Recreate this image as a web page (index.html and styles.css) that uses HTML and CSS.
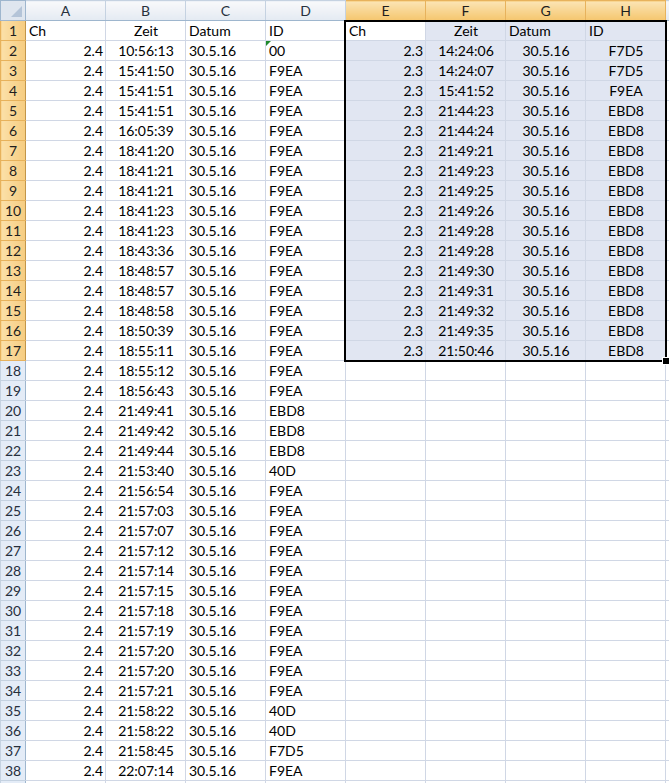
FILE: index.html
```html
<!DOCTYPE html>
<html>
<head>
<meta charset="utf-8">
<link rel="stylesheet" href="styles.css">
</head>
<body>
<div class="sheet">
<table class="grid">
<colgroup><col class="c-rh"><col class="c"><col class="c"><col class="c"><col class="c"><col class="c"><col class="c"><col class="c"><col class="c"><col class="c"></colgroup>
<thead>
<tr><th class="corner"><span class="tri"></span></th><th class="ch">A</th><th class="ch">B</th><th class="ch">C</th><th class="ch">D</th><th class="ch sel">E</th><th class="ch sel">F</th><th class="ch sel">G</th><th class="ch sel">H</th><th class="ch"></th></tr>
</thead>
<tbody>
<tr><th class="rh sel">1</th><td>Ch</td><td class="c">Zeit</td><td>Datum</td><td>ID</td><td class="act">Ch</td><td class="s c">Zeit</td><td class="s">Datum</td><td class="s">ID</td><td></td></tr>
<tr><th class="rh sel">2</th><td class="r">2.4</td><td class="c">10:56:13</td><td>30.5.16</td><td class="warn">00</td><td class="s r">2.3</td><td class="s c">14:24:06</td><td class="s c">30.5.16</td><td class="s c">F7D5</td><td></td></tr>
<tr><th class="rh sel">3</th><td class="r">2.4</td><td class="c">15:41:50</td><td>30.5.16</td><td>F9EA</td><td class="s r">2.3</td><td class="s c">14:24:07</td><td class="s c">30.5.16</td><td class="s c">F7D5</td><td></td></tr>
<tr><th class="rh sel">4</th><td class="r">2.4</td><td class="c">15:41:51</td><td>30.5.16</td><td>F9EA</td><td class="s r">2.3</td><td class="s c">15:41:52</td><td class="s c">30.5.16</td><td class="s c">F9EA</td><td></td></tr>
<tr><th class="rh sel">5</th><td class="r">2.4</td><td class="c">15:41:51</td><td>30.5.16</td><td>F9EA</td><td class="s r">2.3</td><td class="s c">21:44:23</td><td class="s c">30.5.16</td><td class="s c">EBD8</td><td></td></tr>
<tr><th class="rh sel">6</th><td class="r">2.4</td><td class="c">16:05:39</td><td>30.5.16</td><td>F9EA</td><td class="s r">2.3</td><td class="s c">21:44:24</td><td class="s c">30.5.16</td><td class="s c">EBD8</td><td></td></tr>
<tr><th class="rh sel">7</th><td class="r">2.4</td><td class="c">18:41:20</td><td>30.5.16</td><td>F9EA</td><td class="s r">2.3</td><td class="s c">21:49:21</td><td class="s c">30.5.16</td><td class="s c">EBD8</td><td></td></tr>
<tr><th class="rh sel">8</th><td class="r">2.4</td><td class="c">18:41:21</td><td>30.5.16</td><td>F9EA</td><td class="s r">2.3</td><td class="s c">21:49:23</td><td class="s c">30.5.16</td><td class="s c">EBD8</td><td></td></tr>
<tr><th class="rh sel">9</th><td class="r">2.4</td><td class="c">18:41:21</td><td>30.5.16</td><td>F9EA</td><td class="s r">2.3</td><td class="s c">21:49:25</td><td class="s c">30.5.16</td><td class="s c">EBD8</td><td></td></tr>
<tr><th class="rh sel">10</th><td class="r">2.4</td><td class="c">18:41:23</td><td>30.5.16</td><td>F9EA</td><td class="s r">2.3</td><td class="s c">21:49:26</td><td class="s c">30.5.16</td><td class="s c">EBD8</td><td></td></tr>
<tr><th class="rh sel">11</th><td class="r">2.4</td><td class="c">18:41:23</td><td>30.5.16</td><td>F9EA</td><td class="s r">2.3</td><td class="s c">21:49:28</td><td class="s c">30.5.16</td><td class="s c">EBD8</td><td></td></tr>
<tr><th class="rh sel">12</th><td class="r">2.4</td><td class="c">18:43:36</td><td>30.5.16</td><td>F9EA</td><td class="s r">2.3</td><td class="s c">21:49:28</td><td class="s c">30.5.16</td><td class="s c">EBD8</td><td></td></tr>
<tr><th class="rh sel">13</th><td class="r">2.4</td><td class="c">18:48:57</td><td>30.5.16</td><td>F9EA</td><td class="s r">2.3</td><td class="s c">21:49:30</td><td class="s c">30.5.16</td><td class="s c">EBD8</td><td></td></tr>
<tr><th class="rh sel">14</th><td class="r">2.4</td><td class="c">18:48:57</td><td>30.5.16</td><td>F9EA</td><td class="s r">2.3</td><td class="s c">21:49:31</td><td class="s c">30.5.16</td><td class="s c">EBD8</td><td></td></tr>
<tr><th class="rh sel">15</th><td class="r">2.4</td><td class="c">18:48:58</td><td>30.5.16</td><td>F9EA</td><td class="s r">2.3</td><td class="s c">21:49:32</td><td class="s c">30.5.16</td><td class="s c">EBD8</td><td></td></tr>
<tr><th class="rh sel">16</th><td class="r">2.4</td><td class="c">18:50:39</td><td>30.5.16</td><td>F9EA</td><td class="s r">2.3</td><td class="s c">21:49:35</td><td class="s c">30.5.16</td><td class="s c">EBD8</td><td></td></tr>
<tr><th class="rh sel">17</th><td class="r">2.4</td><td class="c">18:55:11</td><td>30.5.16</td><td>F9EA</td><td class="s r">2.3</td><td class="s c">21:50:46</td><td class="s c">30.5.16</td><td class="s c">EBD8</td><td></td></tr>
<tr><th class="rh">18</th><td class="r">2.4</td><td class="c">18:55:12</td><td>30.5.16</td><td>F9EA</td><td></td><td></td><td></td><td></td><td></td></tr>
<tr><th class="rh">19</th><td class="r">2.4</td><td class="c">18:56:43</td><td>30.5.16</td><td>F9EA</td><td></td><td></td><td></td><td></td><td></td></tr>
<tr><th class="rh">20</th><td class="r">2.4</td><td class="c">21:49:41</td><td>30.5.16</td><td>EBD8</td><td></td><td></td><td></td><td></td><td></td></tr>
<tr><th class="rh">21</th><td class="r">2.4</td><td class="c">21:49:42</td><td>30.5.16</td><td>EBD8</td><td></td><td></td><td></td><td></td><td></td></tr>
<tr><th class="rh">22</th><td class="r">2.4</td><td class="c">21:49:44</td><td>30.5.16</td><td>EBD8</td><td></td><td></td><td></td><td></td><td></td></tr>
<tr><th class="rh">23</th><td class="r">2.4</td><td class="c">21:53:40</td><td>30.5.16</td><td>40D</td><td></td><td></td><td></td><td></td><td></td></tr>
<tr><th class="rh">24</th><td class="r">2.4</td><td class="c">21:56:54</td><td>30.5.16</td><td>F9EA</td><td></td><td></td><td></td><td></td><td></td></tr>
<tr><th class="rh">25</th><td class="r">2.4</td><td class="c">21:57:03</td><td>30.5.16</td><td>F9EA</td><td></td><td></td><td></td><td></td><td></td></tr>
<tr><th class="rh">26</th><td class="r">2.4</td><td class="c">21:57:07</td><td>30.5.16</td><td>F9EA</td><td></td><td></td><td></td><td></td><td></td></tr>
<tr><th class="rh">27</th><td class="r">2.4</td><td class="c">21:57:12</td><td>30.5.16</td><td>F9EA</td><td></td><td></td><td></td><td></td><td></td></tr>
<tr><th class="rh">28</th><td class="r">2.4</td><td class="c">21:57:14</td><td>30.5.16</td><td>F9EA</td><td></td><td></td><td></td><td></td><td></td></tr>
<tr><th class="rh">29</th><td class="r">2.4</td><td class="c">21:57:15</td><td>30.5.16</td><td>F9EA</td><td></td><td></td><td></td><td></td><td></td></tr>
<tr><th class="rh">30</th><td class="r">2.4</td><td class="c">21:57:18</td><td>30.5.16</td><td>F9EA</td><td></td><td></td><td></td><td></td><td></td></tr>
<tr><th class="rh">31</th><td class="r">2.4</td><td class="c">21:57:19</td><td>30.5.16</td><td>F9EA</td><td></td><td></td><td></td><td></td><td></td></tr>
<tr><th class="rh">32</th><td class="r">2.4</td><td class="c">21:57:20</td><td>30.5.16</td><td>F9EA</td><td></td><td></td><td></td><td></td><td></td></tr>
<tr><th class="rh">33</th><td class="r">2.4</td><td class="c">21:57:20</td><td>30.5.16</td><td>F9EA</td><td></td><td></td><td></td><td></td><td></td></tr>
<tr><th class="rh">34</th><td class="r">2.4</td><td class="c">21:57:21</td><td>30.5.16</td><td>F9EA</td><td></td><td></td><td></td><td></td><td></td></tr>
<tr><th class="rh">35</th><td class="r">2.4</td><td class="c">21:58:22</td><td>30.5.16</td><td>40D</td><td></td><td></td><td></td><td></td><td></td></tr>
<tr><th class="rh">36</th><td class="r">2.4</td><td class="c">21:58:22</td><td>30.5.16</td><td>40D</td><td></td><td></td><td></td><td></td><td></td></tr>
<tr><th class="rh">37</th><td class="r">2.4</td><td class="c">21:58:45</td><td>30.5.16</td><td>F7D5</td><td></td><td></td><td></td><td></td><td></td></tr>
<tr><th class="rh">38</th><td class="r">2.4</td><td class="c">22:07:14</td><td>30.5.16</td><td>F9EA</td><td></td><td></td><td></td><td></td><td></td></tr>
<tr><th class="rh"></th><td></td><td></td><td></td><td></td><td></td><td></td><td></td><td></td><td></td></tr>
</tbody>
</table>
<div class="selbox"><span class="handle"></span></div>
</div>
</body>
</html>
```
FILE: styles.css
```css
html, body {
  margin: 0;
  padding: 0;
  background: #ffffff;
  overflow: hidden;
}
.sheet {
  position: relative;
  width: 669px;
  height: 783px;
  overflow: hidden;
}
.grid {
  border-collapse: collapse;
  table-layout: fixed;
  width: 745px;
  font-family: Lato, "Liberation Sans", sans-serif;
  font-size: 14px;
  color: #000;
}
.c-rh { width: 25px; }
.c { width: 80px; }
.grid td, .grid th {
  height: 19px;
  padding: 0 2px 0 3px;
  border: 1px solid #d0d7e5;
  white-space: nowrap;
  overflow: hidden;
  line-height: 19px;
  font-weight: normal;
  text-align: left;
  box-sizing: border-box;
}
.grid tbody tr { height: 20px; }
.grid thead tr { height: 20px; }
.grid td.r { text-align: right; }
.grid td.c { text-align: center; }
.grid td.s { background: #e1e6f2; }
.grid td.act { background: #ffffff; }
.grid td.warn { position: relative; }
.grid td.warn::before {
  content: "";
  position: absolute;
  left: 0;
  top: 0;
  border-top: 5px solid #1f8a2c;
  border-right: 5px solid transparent;
}
.corner {
  background: #dfe6ef;
  border: 1px solid #9eb6ce !important;
  position: relative;
}
.corner .tri {
  position: absolute;
  right: 3px;
  bottom: 3px;
  width: 0;
  height: 0;
  border-left: 11px solid transparent;
  border-bottom: 11px solid #b4c4d8;
}
.grid th.ch {
  text-align: center;
  padding: 0;
  background: linear-gradient(#f8f9fb, #e4eaf2);
  border: 1px solid #c5d2e1;
  border-bottom-color: #9eb6ce;
  color: #27303d;
  font-size: 14px;
}
.grid th.ch.sel {
  background: linear-gradient(#fbe4b4, #f5c66e);
  border-color: #e7b25c;
  border-bottom-color: #c2964a;
  color: #1e1e1e;
}
.grid th.rh {
  text-align: center;
  padding: 0;
  background: #e4ecf7;
  border: 1px solid #c5d2e1;
  border-right-color: #9eb6ce;
  color: #27303d;
  font-size: 14px;
}
.grid th.rh.sel {
  background: linear-gradient(90deg, #fbe0a8, #f6cc80);
  border-color: #e7b25c;
  border-right-color: #c2964a;
  color: #1e1e1e;
}
.selbox {
  position: absolute;
  left: 344px;
  top: 20px;
  width: 323px;
  height: 342px;
  border: 2px solid #000;
  box-sizing: border-box;
  pointer-events: none;
}
.handle {
  position: absolute;
  right: -5px;
  bottom: -5px;
  width: 6px;
  height: 6px;
  background: #000;
  border: 1px solid #fff;
}
```
